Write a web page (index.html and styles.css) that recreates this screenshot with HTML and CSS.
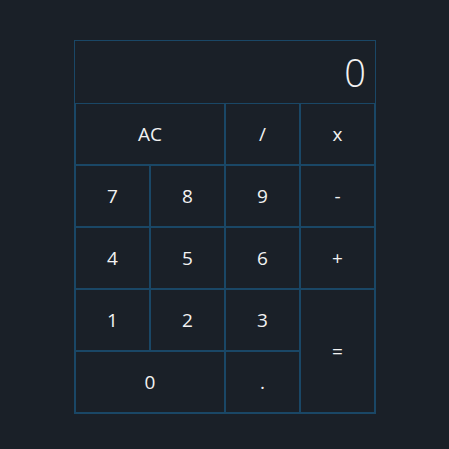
FILE: index.html
```html
<!DOCTYPE html>
<html>
<head>
<meta charset="utf-8">
<link rel="stylesheet" href="styles.css">
</head>
<body>
<div class="calc">
  <div class="display">0</div>
  <div class="keys">
    <button class="key span2">AC</button>
    <button class="key">/</button>
    <button class="key">x</button>
    <button class="key">7</button>
    <button class="key">8</button>
    <button class="key">9</button>
    <button class="key">-</button>
    <button class="key">4</button>
    <button class="key">5</button>
    <button class="key">6</button>
    <button class="key">+</button>
    <button class="key">1</button>
    <button class="key">2</button>
    <button class="key">3</button>
    <button class="key tall">=</button>
    <button class="key span2">0</button>
    <button class="key">.</button>
  </div>
</div>
</body>
</html>
```
FILE: styles.css
```css
html, body {
  margin: 0;
  padding: 0;
  background: #1a2028;
  height: 100%;
}
body {
  padding: 40px 0 0 74px;
  box-sizing: border-box;
}
.calc {
  width: 300px;
  border: 1px solid #1a4766;
  font-family: "Open Sans", "Noto Sans", sans-serif;
  font-weight: 300;
  color: #f2f2f2;
}
.display {
  height: 62px;
  box-sizing: border-box;
  display: flex;
  align-items: center;
  justify-content: flex-end;
  padding-right: 9px;
  font-size: 38px;
  line-height: 1;
}
.keys {
  display: grid;
  grid-template-columns: repeat(4, 75px);
  grid-auto-rows: 62px;
}
.key {
  background: transparent;
  border: 1px solid #1a4766;
  color: #f2f2f2;
  font-family: inherit;
  font-weight: 400;
  font-size: 19px;
  padding: 0;
  margin: 0;
  display: flex;
  align-items: center;
  justify-content: center;
}
.span2 { grid-column: span 2; }
.tall { grid-row: span 2; }
```
